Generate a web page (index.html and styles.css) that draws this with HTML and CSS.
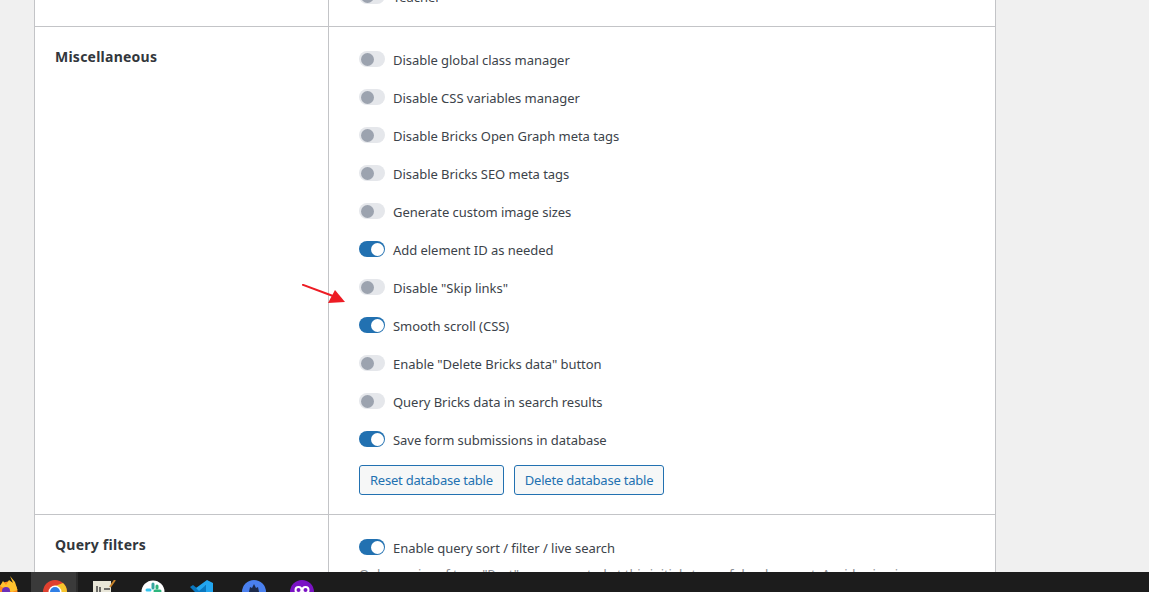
FILE: index.html
```html
<!DOCTYPE html>
<html lang="en">
<head>
<meta charset="utf-8">
<title>Bricks settings</title>
<link rel="stylesheet" href="styles.css">
</head>
<body>
<div class="screen">
  <main class="page">
    <section class="table">
      <div class="row row-top">
        <div class="head"></div>
        <div class="cell">
          <div class="option option-cut"><span class="toggle"></span><span>Teacher</span></div>
        </div>
      </div>
      <div class="row row-misc">
        <div class="head"><h3>Miscellaneous</h3></div>
        <div class="cell">
          <div class="option"><span class="toggle"></span><span>Disable global class manager</span></div>
          <div class="option"><span class="toggle"></span><span>Disable CSS variables manager</span></div>
          <div class="option"><span class="toggle"></span><span>Disable Bricks Open Graph meta tags</span></div>
          <div class="option"><span class="toggle"></span><span>Disable Bricks SEO meta tags</span></div>
          <div class="option"><span class="toggle"></span><span>Generate custom image sizes</span></div>
          <div class="option"><span class="toggle on"></span><span>Add element ID as needed</span></div>
          <div class="option"><span class="toggle"></span><span>Disable "Skip links"</span></div>
          <div class="option"><span class="toggle on"></span><span>Smooth scroll (CSS)</span></div>
          <div class="option"><span class="toggle"></span><span>Enable "Delete Bricks data" button</span></div>
          <div class="option"><span class="toggle"></span><span>Query Bricks data in search results</span></div>
          <div class="option"><span class="toggle on"></span><span>Save form submissions in database</span></div>
          <div class="buttons">
            <button class="btn">Reset database table</button>
            <button class="btn">Delete database table</button>
          </div>
        </div>
      </div>
      <div class="row row-query">
        <div class="head"><h3>Query filters</h3></div>
        <div class="cell">
          <div class="option"><span class="toggle on"></span><span>Enable query sort / filter / live search</span></div>
          <p class="desc">Only queries of type "Post" are supported at this initial stage of development. Avoid using in</p>
        </div>
      </div>
    </section>
    <svg class="arrow" width="46" height="22" viewBox="0 0 46 22"><path d="M0 0.500 L31 12" stroke="#ed1c24" stroke-width="2" fill="none"/><path d="M43 18 L26 19 L33 6 Z" fill="#ed1c24"/></svg>
  </main>
  <footer class="taskbar">
    <span class="slot slot-fox"><svg width="18" height="20" viewBox="0 0 18 20"><circle cx="8" cy="19" r="9.500" fill="#ff8a1f"/><path d="M0 14 L3 9 L6 13 L9 8 L13 11 L10 4 L15 10 L17.500 18 L12 20Z" fill="#ffc22e"/><circle cx="6" cy="19" r="4" fill="#6b2fb8"/></svg></span>
    <span class="slot slot-chrome"><svg width="24" height="12" viewBox="0 0 24 12"><circle cx="12" cy="12" r="12" fill="#e0402f"/><path d="M12 12 L24 12 A12 12 0 0 0 20 3 L12 6Z" fill="#f7c52c"/><circle cx="12" cy="12" r="6.500" fill="#fff"/><circle cx="12" cy="12" r="5" fill="#2f7fe6"/></svg></span>
    <span class="divider"></span>
    <span class="slot slot-note"><svg width="24" height="12" viewBox="0 0 24 12"><path d="M1 1 L19 1 L19 12 L1 12Z" fill="#e8e6d8"/><path d="M5 6 V12 M8 7 V12 M12 9 H18" stroke="#444" stroke-width="1.500"/><path d="M18 7 L23 0" stroke="#c9842b" stroke-width="2"/></svg></span>
    <span class="slot slot-slack"><svg width="24" height="12" viewBox="0 0 24 12"><circle cx="12" cy="12" r="11.500" fill="#fff"/><path d="M12 4 V8" stroke="#36a5a0" stroke-width="3" stroke-linecap="round"/><path d="M16 6 V8" stroke="#2eb67d" stroke-width="3" stroke-linecap="round"/><path d="M6 10 H9" stroke="#36c5f0" stroke-width="3" stroke-linecap="round"/><path d="M14 11 H19" stroke="#2eb67d" stroke-width="3" stroke-linecap="round"/></svg></span>
    <span class="slot slot-code"><svg width="24" height="12" viewBox="0 0 24 12"><path d="M0 7 L3 5 L8 9 L16 5 V12 H5 Z" fill="#0a78c0"/><path d="M17 0 L23 3 V12 H16 V5 L9 11 L6 8 Z" fill="#22a6f0"/></svg></span>
    <span class="slot slot-blue"><svg width="24" height="12" viewBox="0 0 24 12"><circle cx="12" cy="12" r="12" fill="#4a80ee"/><path d="M12 4 L14 8 L16 7 L17 12 H7 L8 7 L10 8Z" fill="#1c2a4a"/></svg></span>
    <span class="slot slot-purple"><svg width="24" height="12" viewBox="0 0 24 12"><circle cx="12" cy="12" r="12" fill="#7a12c4"/><circle cx="8.500" cy="10" r="3" fill="none" stroke="#fff" stroke-width="2"/><circle cx="15.500" cy="10" r="3" fill="none" stroke="#fff" stroke-width="2"/></svg></span>
  </footer>
</div>
</body>
</html>
```
FILE: styles.css
```css
* { box-sizing: border-box; }
html, body { margin: 0; height: 100%; overflow: hidden; }
body { background: #f0f0f0; font-family: "Noto Sans", "Open Sans", sans-serif; color: #3c434a; font-size: 13px; letter-spacing: -0.04px; }
.screen { height: 592px; display: flex; flex-direction: column; overflow: hidden; }
.page { position: relative; height: 572px; overflow: hidden; padding-left: 34px; }
.table { width: 962px; background: #fff; border-left: 1px solid #c3c4c7; border-right: 1px solid #c3c4c7; }
.row { display: grid; grid-template-columns: 294px 1fr; border-bottom: 1px solid #c3c4c7; }
.row-top { height: 27px; overflow: hidden; }
.row-misc { height: 488px; }
.head { padding: 20px 20px 0; border-right: 1px solid #c3c4c7; }
.head h3 { margin: 0; font-size: 14px; line-height: 20px; font-weight: 700; color: #32373c; letter-spacing: 0.24px; }
.cell { padding: 14px 30px 0; }
.row-top .cell { padding-top: 0; }
.option { display: flex; align-items: center; gap: 8px; height: 38px; line-height: 20px; }
.option-cut { margin-top: -22px; }
.toggle { position: relative; width: 26px; height: 16px; border-radius: 8px; background: #e5e7eb; flex: none; margin-top: -2px; }
.toggle::after { content: ""; position: absolute; left: 1.5px; top: 1.5px; width: 13px; height: 13px; border-radius: 50%; background: #9ca3af; }
.toggle.on { background: #2271b1; }
.toggle.on::after { left: 11.5px; background: #fff; }
.buttons { display: flex; gap: 10px; margin-top: 6px; }
.btn { height: 30px; padding: 0 10px; border: 1px solid #2271b1; border-radius: 3px; background: #f6f7f7; color: #2271b1; font: inherit; letter-spacing: -0.22px; line-height: 28px; }
.desc { margin: -2px 0 0; color: #8c8f94; font-size: 13px; letter-spacing: -0.15px; line-height: 18px; white-space: nowrap; }
.row-query .cell { padding-top: 14px; }
.arrow { position: absolute; left: 302px; top: 284px; }
.taskbar { height: 20px; background: #1c1c1c; display: flex; overflow: hidden; }
.slot { display: flex; align-items: flex-end; justify-content: center; width: 48px; height: 20px; flex: none; }
.slot-fox { width: 31px; justify-content: flex-start; }
.slot-chrome { width: 45px; padding-left: 3px; background: #3a3a3a; }
.divider { width: 2px; height: 20px; background: #2c2c2c; }
.slot-note { margin-left: 2px; }
.slot-slack { margin-left: 1px; }
.slot-code { margin-left: 1px; }
.slot-blue { margin-left: 4px; }
```
